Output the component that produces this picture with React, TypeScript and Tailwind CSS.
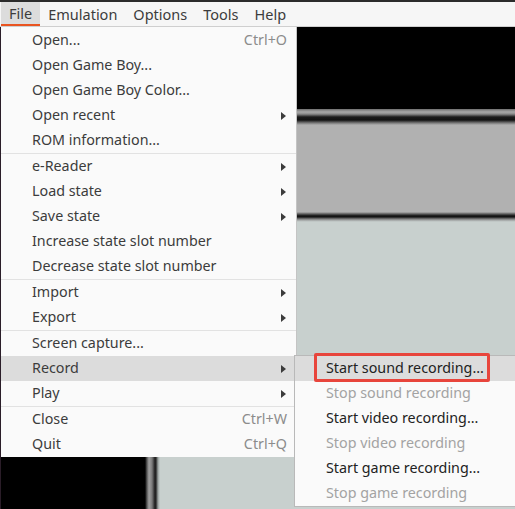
import React from 'react'

type Item =
  | { kind: 'sep' }
  | { kind: 'item'; label: string; shortcut?: string; sub?: boolean; active?: boolean }

const FILE_MENU: Item[] = [
  { kind: 'item', label: 'Open...', shortcut: 'Ctrl+O' },
  { kind: 'item', label: 'Open Game Boy...' },
  { kind: 'item', label: 'Open Game Boy Color...' },
  { kind: 'item', label: 'Open recent', sub: true },
  { kind: 'item', label: 'ROM information...' },
  { kind: 'sep' },
  { kind: 'item', label: 'e-Reader', sub: true },
  { kind: 'item', label: 'Load state', sub: true },
  { kind: 'item', label: 'Save state', sub: true },
  { kind: 'item', label: 'Increase state slot number' },
  { kind: 'item', label: 'Decrease state slot number' },
  { kind: 'sep' },
  { kind: 'item', label: 'Import', sub: true },
  { kind: 'item', label: 'Export', sub: true },
  { kind: 'sep' },
  { kind: 'item', label: 'Screen capture...' },
  { kind: 'item', label: 'Record', sub: true, active: true },
  { kind: 'item', label: 'Play', sub: true },
  { kind: 'sep' },
  { kind: 'item', label: 'Close', shortcut: 'Ctrl+W' },
  { kind: 'item', label: 'Quit', shortcut: 'Ctrl+Q' },
]

const RECORD_MENU = [
  { label: 'Start sound recording...', enabled: true, active: true },
  { label: 'Stop sound recording', enabled: false },
  { label: 'Start video recording...', enabled: true },
  { label: 'Stop video recording', enabled: false },
  { label: 'Start game recording...', enabled: true },
  { label: 'Stop game recording', enabled: false },
]

const Arrow = () => (
  <svg width="5" height="8" viewBox="0 0 5 8" className="block">
    <path d="M0 0 L5 4 L0 8 Z" fill="#3c3c3c" />
  </svg>
)

export default function App() {
  return (
    <div
      className="relative w-[515px] h-[509px] overflow-hidden bg-black text-[14.3px] leading-none"
      style={{ fontFamily: '"Noto Sans", "DejaVu Sans", sans-serif' }}
    >
      <div className="h-[2px] bg-[#2b2b2b]" />

      {/* Menubar */}
      <div className="flex h-[25px] pl-[1px] bg-[#f6f6f6] border-b border-[#cfcfcf] text-[#3c3c3c] text-[14.5px]">
        {['File', 'Emulation', 'Options', 'Tools', 'Help'].map((m, i) => (
          <div
            key={m}
            className={
              i === 0
                ? 'flex items-center px-2 bg-[#dcdcdc] border-b-2 border-[#e95420]'
                : 'flex items-center px-2'
            }
          >
            {m}
          </div>
        ))}
      </div>

      {/* Game screen behind the menus */}
      <div className="flex h-[482px]">
        <div className="w-[1px] bg-[#2a1d28]" />
        <div className="w-[144px] bg-black" />
        <div className="w-[15px] bg-[linear-gradient(to_right,#000_0px,#5a5a5a_2px,#a0a0a0_4px,#7a7a7a_7px,#1c1c1c_10px,#2a2a2a_11px,#9aa2a0_13px,#c8d0ce_15px)]" />
        <div className="flex-1 flex flex-col">
          <div className="h-[82px] bg-black" />
          <div className="h-[16px] bg-[linear-gradient(to_bottom,#6e6e6e_0px,#a8a8a8_3px,#8a8a8a_5px,#1a1a1a_8px,#111_11px,#7a7a7a_14px,#b0b0b0_16px)]" />
          <div className="h-[87px] bg-[#b1b1b1]" />
          <div className="h-[10px] bg-[linear-gradient(to_bottom,#b0b0b0_0px,#5a5a5a_2px,#0e0e0e_4px,#1a1a1a_5px,#7d7d7d_7px,#b8bebd_9px,#c8d0ce_10px)]" />
          <div className="flex-1 bg-[#c8d0ce]" />
        </div>
      </div>

      {/* File menu */}
      <div className="absolute left-[1px] top-[27px] w-[296px] pt-[1px] bg-[#fafafa] border-r border-[#c4c4c4] text-[#3c3c3c]">
        {FILE_MENU.map((it, i) =>
          it.kind === 'sep' ? (
            <div key={i} className="h-[1px] bg-[#e2e2e2]" />
          ) : (
            <div
              key={i}
              className={
                it.active
                  ? 'flex items-center h-[25px] pl-[31px] pr-[9px] bg-[#dcdcdc]'
                  : 'flex items-center h-[25px] pl-[31px] pr-[9px]'
              }
            >
              <span className="flex-1">{it.label}</span>
              {it.shortcut && <span className="text-[#8c8c8c]">{it.shortcut}</span>}
              {it.sub && (
                <span className="mr-[1px]">
                  <Arrow />
                </span>
              )}
            </div>
          )
        )}
      </div>

      {/* Record submenu */}
      <div className="absolute left-[294px] top-[355px] w-[240px] bg-[#fafafa] border border-[#b9b9b9]">
        {RECORD_MENU.map((it) => (
          <div
            key={it.label}
            className={
              'relative flex items-center h-[25px] pl-[31px] ' +
              (it.active ? 'bg-[#dcdcdc] ' : '') +
              (it.enabled ? 'text-[#222222]' : 'text-[#a3a3a3]')
            }
          >
            {it.label}
            {it.active && (
              <div className="absolute left-[19px] top-[-3px] w-[176px] h-[29px] border-[3px] border-[#e8453c] rounded-[2px]" />
            )}
          </div>
        ))}
      </div>
    </div>
  )
}
